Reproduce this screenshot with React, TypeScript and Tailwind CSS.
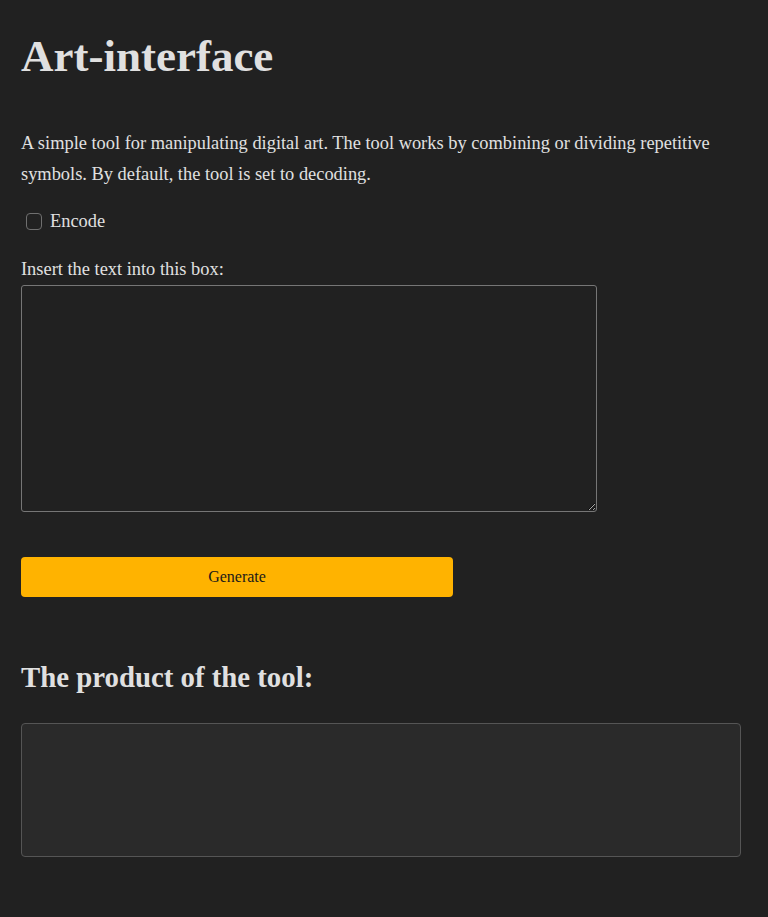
const App = () => {
  return (
    <div className="min-h-[917px] bg-[#212121] text-[#e0e0e0] font-['Liberation_Serif','Times_New_Roman',serif]">
      <main className="px-[21px] pt-[29px] pb-[60px]">
        <h1 className="text-[45px] font-bold leading-[1.2]">Art-interface</h1>
        <p className="mt-[45px] text-[18.4px] leading-[31px]">
          A simple tool for manipulating digital art. The tool works by combining or dividing repetitive
          symbols. By default, the tool is set to decoding.
        </p>
        <label className="mt-[16px] flex h-[31px] items-center gap-[8px] text-[18.4px] leading-[31px]">
          <input
            type="checkbox"
            className="ml-[5px] h-[17px] w-[16px] appearance-none rounded-[4px] border border-[#6f6f6f] bg-transparent"
          />
          <span>Encode</span>
        </label>
        <label htmlFor="art-input" className="mt-[17px] block text-[18.4px] leading-[31px]">
          Insert the text into this box:
        </label>
        <textarea
          id="art-input"
          className="block h-[227px] w-[576px] rounded-[3px] border border-[#767676] bg-transparent p-2 text-[#e0e0e0] outline-none"
        />
        <button className="mt-[45px] h-[40px] w-[432px] rounded-[4px] bg-[#ffb300] text-[16px] text-[#1a1a1a]">
          Generate
        </button>
        <h2 className="mt-[63px] text-[28.8px] font-bold leading-[1.2]">The product of the tool:</h2>
        <div className="mt-[28px] h-[134px] w-[720px] rounded-[4px] border border-[#555555] bg-[#2a2a2a]" />
      </main>
    </div>
  );
};

export default App;
